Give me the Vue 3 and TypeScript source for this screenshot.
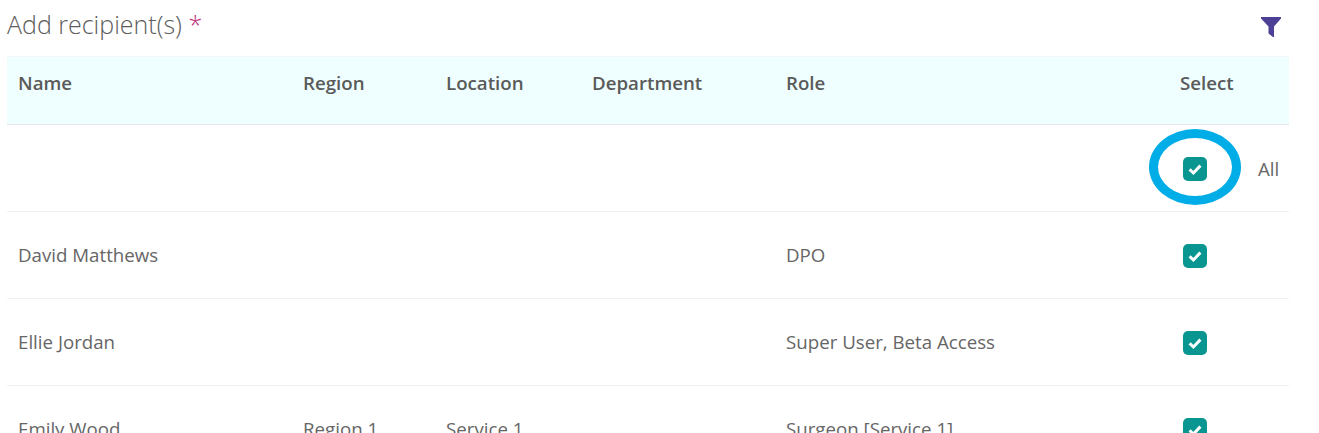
<script setup lang="ts">
interface Row { name: string; region: string; location: string; department: string; role: string }
const rows: Row[] = [
  { name: 'David Matthews', region: '', location: '', department: '', role: 'DPO' },
  { name: 'Ellie Jordan', region: '', location: '', department: '', role: 'Super User, Beta Access' },
  { name: 'Emily Wood', region: 'Region 1', location: 'Service 1', department: '', role: 'Surgeon [Service 1]' },
]
</script>

<template>
  <div class="page">
    <div class="title-bar">
      <h2 class="title">Add recipient(s) <span class="req">*</span></h2>
      <svg class="filter" viewBox="0 0 20 20" width="20" height="20" aria-hidden="true">
        <path d="M0 0H20V1.5L13 9.5V20H12L7.5 16.5V9.5L0 1.5Z" fill="#4b3f96" />
      </svg>
    </div>
    <div class="table">
      <div class="row head">
        <div>Name</div><div>Region</div><div>Location</div><div>Department</div><div>Role</div><div>Select</div>
      </div>
      <div class="row">
        <div></div><div></div><div></div><div></div><div></div>
        <div class="select">
          <span class="check-wrap">
            <span class="box"><svg viewBox="0 0 14 14" width="14" height="14"><path d="M1.6 7.4L5.4 11L12.4 3.6" fill="none" stroke="#fff" stroke-width="3" /></svg></span>
            <span class="ring"></span>
          </span>
          <span class="all">All</span>
        </div>
      </div>
      <div v-for="r in rows" :key="r.name" class="row body">
        <div>{{ r.name }}</div><div>{{ r.region }}</div><div>{{ r.location }}</div><div>{{ r.department }}</div><div>{{ r.role }}</div>
        <div class="select">
          <span class="box"><svg viewBox="0 0 14 14" width="14" height="14"><path d="M1.6 7.4L5.4 11L12.4 3.6" fill="none" stroke="#fff" stroke-width="3" /></svg></span>
        </div>
      </div>
    </div>
  </div>
</template>

<style>
html, body { margin: 0; background: #fff; overflow: hidden; }
</style>

<style scoped>
.page {
  width: 1319px;
  height: 433px;
  overflow: hidden;
  padding: 0 30px 0 7px;
  box-sizing: border-box;
  font-family: "Open Sans", "Liberation Sans", sans-serif;
  color: #666;
}
.title-bar {
  height: 56px;
  display: flex;
  justify-content: space-between;
  align-items: flex-start;
}
.title {
  margin: 6px 0 0;
  font-size: 25px;
  font-weight: 300;
  line-height: 36px;
  color: #5c5c5c;
}
.req { color: #c2317f; }
.filter { margin: 17px 8px 0 0; }
.row {
  display: grid;
  grid-template-columns: 285px 143px 146px 194px 394px 120px;
  height: 87px;
  box-sizing: border-box;
  border-bottom: 1px solid #f0f0f0;
  font-size: 18.7px;
  align-items: center;
}
.row > div { padding-left: 11px; }
.row > .select { padding-left: 14px; display: flex; align-items: center; }
.body > div:not(.select) { padding-bottom: 2px; }
.head {
  height: 69px;
  padding-bottom: 16px;
  background: #efffff;
  border-top: 1px solid #f2f8f8;
  border-bottom-color: #e6e6e6;
  font-weight: 600;
  color: #5a5a5a;
}
.check-wrap { position: relative; display: inline-flex; }
.box {
  width: 24px;
  height: 24px;
  margin-top: 2px;
  border-radius: 5px;
  background: #0a9690;
  display: inline-flex;
  align-items: center;
  justify-content: center;
}
.ring {
  position: absolute;
  left: -34px;
  top: -26px;
  width: 92px;
  height: 76px;
  box-sizing: border-box;
  border: 9px solid #00ade6;
  border-radius: 50%;
}
.all { margin-left: 51px; color: #666; }
</style>
